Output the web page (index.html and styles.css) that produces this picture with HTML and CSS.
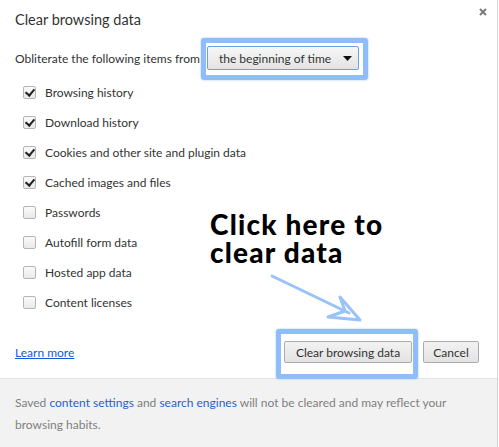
FILE: index.html
```html
<!DOCTYPE html>
<html lang="en">
<head>
    <meta charset="UTF-8">
    <title>Clear browsing data</title>
    <link rel="stylesheet" href="styles.css">
</head>
<body>
    <div class="dialog">
        <div class="main">
            <div class="title">Clear browsing data</div>
            <svg class="close" width="8" height="8" viewBox="0 0 8 8">
                <path d="M1 1L7 7M7 1L1 7" stroke="#7a7a7a" stroke-width="2"/>
            </svg>

            <div class="period">
                <span>Obliterate the following items from</span>
                <div class="select">
                    <span>the beginning of time</span>
                    <svg width="9" height="5" viewBox="0 0 9 5"><path d="M0 0H9L4.5 5Z" fill="#111"/></svg>
                </div>
            </div>

            <ul class="items">
                <li><span class="box checked"></span>Browsing history</li>
                <li><span class="box checked"></span>Download history</li>
                <li><span class="box checked"></span>Cookies and other site and plugin data</li>
                <li><span class="box checked"></span>Cached images and files</li>
                <li><span class="box"></span>Passwords</li>
                <li><span class="box"></span>Autofill form data</li>
                <li><span class="box"></span>Hosted app data</li>
                <li><span class="box"></span>Content licenses</li>
            </ul>

            <div class="actions">
                <a href="#">Learn more</a>
                <div class="buttons">
                    <button class="btn btn-clear">Clear browsing data</button>
                    <button class="btn btn-cancel">Cancel</button>
                </div>
            </div>
        </div>

        <div class="footer">
            <span>Saved</span> <a href="#">content settings</a> <span>and</span> <a href="#">search engines</a> <span>will not be cleared and may reflect your</span><br>
            <span>browsing habits.</span>
        </div>

        <!-- anotaciones encima del dialogo -->
        <div class="mark mark-select"></div>
        <div class="mark mark-button"></div>
        <div class="note">Click here to<br>clear data</div>
        <svg class="arrow" width="110" height="60" viewBox="0 0 110 60">
            <path d="M7 6L84 43" stroke="#98c2f8" stroke-width="3" fill="none" stroke-linecap="round"/>
            <path d="M75 27L95 50L63 47L80 41Z" stroke="#98c2f8" stroke-width="3" fill="none" stroke-linejoin="round"/>
        </svg>
    </div>
</body>
</html>
```

FILE: styles.css
```css
body{
    margin: 0;
    font-family: Lato, "Open Sans", sans-serif;
    font-size: 12px;
    color: #333;
}
.dialog{
    position: relative;
    width: 497px;
    height: 447px;
    border-right: 1px solid #d4d4d4;
    background: #fff;
    overflow: hidden;
}
.main{
    position: relative;
    padding: 10px 18px 15px 15px;
    border-bottom: 1px solid #e4e4e4;
}
.title{
    font-size: 14.5px;
    line-height: 20px;
    color: #333;
}
.close{
    position: absolute;
    top: 8px;
    right: 10px;
}
.period{
    display: flex;
    align-items: center;
    height: 24px;
    margin-top: 16px;
}
.select{
    display: flex;
    align-items: center;
    justify-content: space-between;
    margin-left: 7px;
    padding: 0 6px 0 11px;
    box-sizing: border-box;
    width: 152px;
    height: 24px;
    border: 1px solid #6d9fe4;
    border-radius: 2px;
    background: linear-gradient(#f7f7f7, #e3e3e3);
}
.items{
    list-style: none;
    margin: 7px 0 0 8px;
    padding: 0;
}
.items li{
    display: flex;
    align-items: center;
    height: 30px;
}
.box{
    width: 11px;
    height: 11px;
    margin-right: 9px;
    border: 1px solid #b5b5b5;
    border-radius: 2px;
    background: linear-gradient(#fafafa, #e9e9e9);
    position: relative;
}
.box.checked::after{
    content: "";
    position: absolute;
    left: 3px;
    top: 0px;
    width: 4px;
    height: 7px;
    border: solid #222;
    border-width: 0 2px 2px 0;
    transform: rotate(40deg);
}
.actions{
    display: flex;
    align-items: center;
    justify-content: space-between;
    margin-top: 24px;
    height: 22px;
}
.actions a{
    color: #1558d6;
}
.buttons{
    display: flex;
    gap: 11px;
}
.btn{
    height: 22px;
    padding: 0;
    font-family: inherit;
    font-size: 12px;
    color: #333;
    border: 1px solid #acacac;
    border-radius: 2px;
    background: linear-gradient(#f2f2f2, #e3e3e3);
}
.btn-clear{
    width: 128px;
}
.btn-cancel{
    width: 56px;
}
.footer{
    height: 68px;
    box-sizing: border-box;
    padding: 13px 15px 0;
    background: #f2f2f2;
    color: #808080;
    line-height: 22px;
}
.footer a{
    color: #2a5fd0;
    text-decoration: none;
}
.mark{
    position: absolute;
    border: 5px solid #8fbdfb;
    border-radius: 3px;
    box-shadow: 0 0 2px #8fbdfb;
}
.mark-select{
    left: 201px;
    top: 38px;
    width: 157px;
    height: 32px;
}
.mark-button{
    left: 276px;
    top: 329px;
    width: 132px;
    height: 40px;
}
.note{
    position: absolute;
    left: 210px;
    top: 210px;
    font-family: Lato, sans-serif;
    font-weight: 900;
    font-size: 28px;
    letter-spacing: 1.2px;
    line-height: 28px;
    color: #000;
}
.arrow{
    position: absolute;
    left: 265px;
    top: 270px;
}
```
